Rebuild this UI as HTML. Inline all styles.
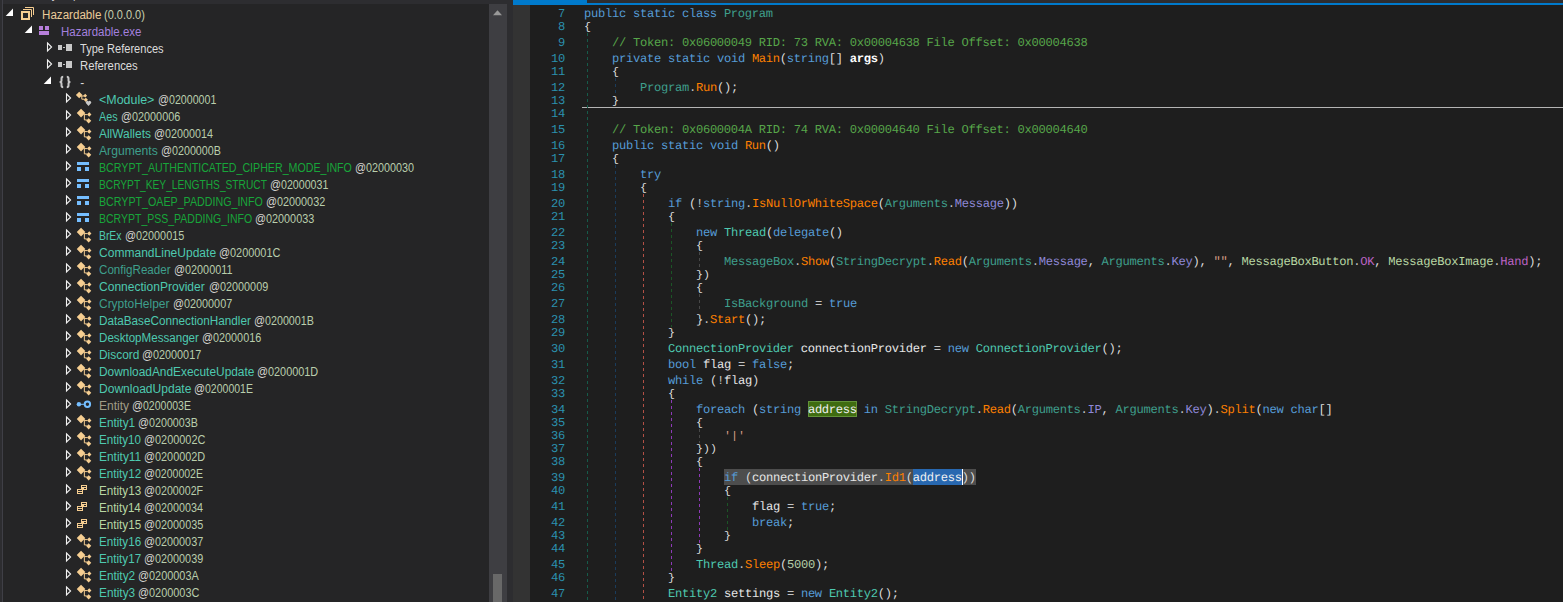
<!DOCTYPE html><html><head><meta charset="utf-8"><title>dnSpy</title><style>

html,body{margin:0;padding:0}
body{width:1563px;height:602px;overflow:hidden;background:#1e1e1e;position:relative}
#tree{position:absolute;left:0;top:0;width:489px;height:602px;background:#252526;overflow:hidden}
#tree .t{position:absolute;transform-origin:0 0;white-space:pre;font-family:"Liberation Sans",sans-serif;font-size:12px;line-height:17px;height:17px}
#code{position:absolute;left:513px;top:0;width:1050px;height:602px;background:#1e1e1e;overflow:hidden}
#code .l,#code .n{position:absolute;white-space:pre;font-family:"Liberation Mono",monospace;font-size:12.14px;letter-spacing:-0.285px;line-height:13px;height:13px;text-rendering:geometricPrecision}
#code .p{font-size:11.667px;letter-spacing:0;text-rendering:auto}
#code .n{left:0;width:52px;text-align:right;color:#2B91AF}
.box{position:absolute}
svg{position:absolute;left:0;top:0}

.d{color:#DCDCDC}
.op{color:#C4C4C4}
.kw{color:#569CD6}
.cm{color:#57A64A}
.ty{color:#4EC9B0}
.st{color:#3E9F8C}
.me{color:#FF8000}
.sf{color:#8E88D8}
.ef{color:#BD63C5}
.en{color:#B8D7A3}
.pr{color:#3E9F8C}
.lo{color:#E6E6E6}
.pa{color:#FFFFFF;font-weight:bold}
.s{color:#D69D85}
.nu{color:#B5CEA8}
.hl,.sel{color:#F0F0F0}
</style></head><body>
<div id="tree">
<div class="box" style="left:0;top:0;width:489px;height:4px;background:#2d2d30"></div>
<div class="box" style="left:0;top:0;width:2px;height:602px;background:#2d2d30"></div>
<div class="box" style="left:2px;top:0;width:1px;height:602px;background:#3f3f46"></div>
<span class="t" style="left:10.3px;top:-14px;color:#D0D0D0;transform:scaleX(0.907)">Assembly Explorer</span>
<svg width="489" height="602" viewBox="0 0 489 602"><path d="M5.7 15.9L13 15.9L13 8.6z" fill="#FFFFFF"/><path d="M21 11h9v9h-9z M23 13v5h5v-5z" fill="#F6CE91" fill-rule="evenodd"/><path d="M23 9.5H31.5V17" fill="none" stroke="#F6CE91" stroke-width="1"/><path d="M25 7.5H33.5V15" fill="none" stroke="#F6CE91" stroke-width="1"/><path d="M24.7 32.9L32 32.9L32 25.6z" fill="#FFFFFF"/><rect x="39" y="26" width="4" height="4" fill="#B77FDB"/><rect x="45" y="26" width="4" height="4" fill="#B77FDB"/><rect x="39" y="31" width="10" height="4" fill="#B77FDB"/><path d="M47.5 43.0L51.6 47.0L47.5 51.0z" fill="none" stroke="#F1F1F1" stroke-width="1.1"/><rect x="58" y="45" width="4" height="5" fill="#C8C8C8"/><rect x="63" y="47" width="2" height="1" fill="#C8C8C8"/><rect x="66" y="44" width="6" height="7" fill="#C8C8C8"/><path d="M47.5 60.0L51.6 64.0L47.5 68.0z" fill="none" stroke="#F1F1F1" stroke-width="1.1"/><rect x="58" y="62" width="4" height="5" fill="#C8C8C8"/><rect x="63" y="64" width="2" height="1" fill="#C8C8C8"/><rect x="66" y="61" width="6" height="7" fill="#C8C8C8"/><path d="M43.7 83.9L51 83.9L51 76.6z" fill="#FFFFFF"/><path d="M63.2 76.8q-1.7 0 -1.7 1.7v2q0 1.55 -1.9 1.55q1.9 0 1.9 1.55v2q0 1.7 1.7 1.7" fill="none" stroke="#C8C8C8" stroke-width="2"/><path d="M66.8 76.8q1.7 0 1.7 1.7v2q0 1.55 1.9 1.55q-1.9 0 -1.9 1.55v2q0 1.7 -1.7 1.7" fill="none" stroke="#C8C8C8" stroke-width="2"/><path d="M66.5 94.0L70.6 98.0L66.5 102.0z" fill="none" stroke="#F1F1F1" stroke-width="1.1"/><path d="M75.90 95.00L79.20 91.70L82.50 95.00L79.20 98.30z M83.30 95.70L85.20 93.80L87.10 95.70L85.20 97.60z M83.70 99.80L85.80 97.70L87.90 99.80L85.80 101.90z" fill="#F6CE91"/><path d="M81.20 96.00h3 M81.80 96.00v3.2h2.5" fill="none" stroke="#F6CE91" stroke-width="1"/><path d="M88.5 106.0l-2.5 -2.7a1.45 1.45 0 0 1 2.5 -1.7a1.45 1.45 0 0 1 2.5 1.7z" fill="#C8C8C8"/><path d="M66.5 111.0L70.6 115.0L66.5 119.0z" fill="none" stroke="#F1F1F1" stroke-width="1.1"/><path d="M76.75 113.10L81.05 108.80L85.35 113.10L81.05 117.40z M87.05 114.50L89.25 112.30L91.45 114.50L89.25 116.70z M86.05 120.80L88.65 118.20L91.25 120.80L88.65 123.40z" fill="#F6CE91"/><path d="M83.65 114.60h3.6 M84.35 114.60v5.3h2.5" fill="none" stroke="#F6CE91" stroke-width="1"/><path d="M66.5 128.0L70.6 132.0L66.5 136.0z" fill="none" stroke="#F1F1F1" stroke-width="1.1"/><path d="M76.75 130.10L81.05 125.80L85.35 130.10L81.05 134.40z M87.05 131.50L89.25 129.30L91.45 131.50L89.25 133.70z M86.05 137.80L88.65 135.20L91.25 137.80L88.65 140.40z" fill="#F6CE91"/><path d="M83.65 131.60h3.6 M84.35 131.60v5.3h2.5" fill="none" stroke="#F6CE91" stroke-width="1"/><path d="M66.5 145.0L70.6 149.0L66.5 153.0z" fill="none" stroke="#F1F1F1" stroke-width="1.1"/><path d="M76.75 147.10L81.05 142.80L85.35 147.10L81.05 151.40z M87.05 148.50L89.25 146.30L91.45 148.50L89.25 150.70z M86.05 154.80L88.65 152.20L91.25 154.80L88.65 157.40z" fill="#F6CE91"/><path d="M83.65 148.60h3.6 M84.35 148.60v5.3h2.5" fill="none" stroke="#F6CE91" stroke-width="1"/><path d="M66.5 162.0L70.6 166.0L66.5 170.0z" fill="none" stroke="#F1F1F1" stroke-width="1.1"/><rect x="77" y="162" width="12" height="3" fill="#75BEFF"/><rect x="77" y="167" width="4" height="4" fill="#75BEFF"/><rect x="85" y="167" width="4" height="4" fill="#75BEFF"/><path d="M66.5 179.0L70.6 183.0L66.5 187.0z" fill="none" stroke="#F1F1F1" stroke-width="1.1"/><rect x="77" y="179" width="12" height="3" fill="#75BEFF"/><rect x="77" y="184" width="4" height="4" fill="#75BEFF"/><rect x="85" y="184" width="4" height="4" fill="#75BEFF"/><path d="M66.5 196.0L70.6 200.0L66.5 204.0z" fill="none" stroke="#F1F1F1" stroke-width="1.1"/><rect x="77" y="196" width="12" height="3" fill="#75BEFF"/><rect x="77" y="201" width="4" height="4" fill="#75BEFF"/><rect x="85" y="201" width="4" height="4" fill="#75BEFF"/><path d="M66.5 213.0L70.6 217.0L66.5 221.0z" fill="none" stroke="#F1F1F1" stroke-width="1.1"/><rect x="77" y="213" width="12" height="3" fill="#75BEFF"/><rect x="77" y="218" width="4" height="4" fill="#75BEFF"/><rect x="85" y="218" width="4" height="4" fill="#75BEFF"/><path d="M66.5 230.0L70.6 234.0L66.5 238.0z" fill="none" stroke="#F1F1F1" stroke-width="1.1"/><path d="M76.75 232.10L81.05 227.80L85.35 232.10L81.05 236.40z M87.05 233.50L89.25 231.30L91.45 233.50L89.25 235.70z M86.05 239.80L88.65 237.20L91.25 239.80L88.65 242.40z" fill="#F6CE91"/><path d="M83.65 233.60h3.6 M84.35 233.60v5.3h2.5" fill="none" stroke="#F6CE91" stroke-width="1"/><path d="M66.5 247.0L70.6 251.0L66.5 255.0z" fill="none" stroke="#F1F1F1" stroke-width="1.1"/><path d="M76.75 249.10L81.05 244.80L85.35 249.10L81.05 253.40z M87.05 250.50L89.25 248.30L91.45 250.50L89.25 252.70z M86.05 256.80L88.65 254.20L91.25 256.80L88.65 259.40z" fill="#F6CE91"/><path d="M83.65 250.60h3.6 M84.35 250.60v5.3h2.5" fill="none" stroke="#F6CE91" stroke-width="1"/><path d="M66.5 264.0L70.6 268.0L66.5 272.0z" fill="none" stroke="#F1F1F1" stroke-width="1.1"/><path d="M76.75 266.10L81.05 261.80L85.35 266.10L81.05 270.40z M87.05 267.50L89.25 265.30L91.45 267.50L89.25 269.70z M86.05 273.80L88.65 271.20L91.25 273.80L88.65 276.40z" fill="#F6CE91"/><path d="M83.65 267.60h3.6 M84.35 267.60v5.3h2.5" fill="none" stroke="#F6CE91" stroke-width="1"/><path d="M66.5 281.0L70.6 285.0L66.5 289.0z" fill="none" stroke="#F1F1F1" stroke-width="1.1"/><path d="M76.75 283.10L81.05 278.80L85.35 283.10L81.05 287.40z M87.05 284.50L89.25 282.30L91.45 284.50L89.25 286.70z M86.05 290.80L88.65 288.20L91.25 290.80L88.65 293.40z" fill="#F6CE91"/><path d="M83.65 284.60h3.6 M84.35 284.60v5.3h2.5" fill="none" stroke="#F6CE91" stroke-width="1"/><path d="M66.5 298.0L70.6 302.0L66.5 306.0z" fill="none" stroke="#F1F1F1" stroke-width="1.1"/><path d="M76.75 300.10L81.05 295.80L85.35 300.10L81.05 304.40z M87.05 301.50L89.25 299.30L91.45 301.50L89.25 303.70z M86.05 307.80L88.65 305.20L91.25 307.80L88.65 310.40z" fill="#F6CE91"/><path d="M83.65 301.60h3.6 M84.35 301.60v5.3h2.5" fill="none" stroke="#F6CE91" stroke-width="1"/><path d="M66.5 315.0L70.6 319.0L66.5 323.0z" fill="none" stroke="#F1F1F1" stroke-width="1.1"/><path d="M76.75 317.10L81.05 312.80L85.35 317.10L81.05 321.40z M87.05 318.50L89.25 316.30L91.45 318.50L89.25 320.70z M86.05 324.80L88.65 322.20L91.25 324.80L88.65 327.40z" fill="#F6CE91"/><path d="M83.65 318.60h3.6 M84.35 318.60v5.3h2.5" fill="none" stroke="#F6CE91" stroke-width="1"/><path d="M66.5 332.0L70.6 336.0L66.5 340.0z" fill="none" stroke="#F1F1F1" stroke-width="1.1"/><path d="M76.75 334.10L81.05 329.80L85.35 334.10L81.05 338.40z M87.05 335.50L89.25 333.30L91.45 335.50L89.25 337.70z M86.05 341.80L88.65 339.20L91.25 341.80L88.65 344.40z" fill="#F6CE91"/><path d="M83.65 335.60h3.6 M84.35 335.60v5.3h2.5" fill="none" stroke="#F6CE91" stroke-width="1"/><path d="M66.5 349.0L70.6 353.0L66.5 357.0z" fill="none" stroke="#F1F1F1" stroke-width="1.1"/><path d="M76.75 351.10L81.05 346.80L85.35 351.10L81.05 355.40z M87.05 352.50L89.25 350.30L91.45 352.50L89.25 354.70z M86.05 358.80L88.65 356.20L91.25 358.80L88.65 361.40z" fill="#F6CE91"/><path d="M83.65 352.60h3.6 M84.35 352.60v5.3h2.5" fill="none" stroke="#F6CE91" stroke-width="1"/><path d="M66.5 366.0L70.6 370.0L66.5 374.0z" fill="none" stroke="#F1F1F1" stroke-width="1.1"/><path d="M76.75 368.10L81.05 363.80L85.35 368.10L81.05 372.40z M87.05 369.50L89.25 367.30L91.45 369.50L89.25 371.70z M86.05 375.80L88.65 373.20L91.25 375.80L88.65 378.40z" fill="#F6CE91"/><path d="M83.65 369.60h3.6 M84.35 369.60v5.3h2.5" fill="none" stroke="#F6CE91" stroke-width="1"/><path d="M66.5 383.0L70.6 387.0L66.5 391.0z" fill="none" stroke="#F1F1F1" stroke-width="1.1"/><path d="M76.75 385.10L81.05 380.80L85.35 385.10L81.05 389.40z M87.05 386.50L89.25 384.30L91.45 386.50L89.25 388.70z M86.05 392.80L88.65 390.20L91.25 392.80L88.65 395.40z" fill="#F6CE91"/><path d="M83.65 386.60h3.6 M84.35 386.60v5.3h2.5" fill="none" stroke="#F6CE91" stroke-width="1"/><path d="M66.5 400.0L70.6 404.0L66.5 408.0z" fill="none" stroke="#F1F1F1" stroke-width="1.1"/><circle cx="78.9" cy="404.3" r="2.2" fill="#75BEFF"/><rect x="80" y="403.8" width="5" height="1" fill="#75BEFF"/><circle cx="87.4" cy="404.3" r="2.7" fill="none" stroke="#75BEFF" stroke-width="2"/><path d="M66.5 417.0L70.6 421.0L66.5 425.0z" fill="none" stroke="#F1F1F1" stroke-width="1.1"/><path d="M76.75 419.10L81.05 414.80L85.35 419.10L81.05 423.40z M87.05 420.50L89.25 418.30L91.45 420.50L89.25 422.70z M86.05 426.80L88.65 424.20L91.25 426.80L88.65 429.40z" fill="#F6CE91"/><path d="M83.65 420.60h3.6 M84.35 420.60v5.3h2.5" fill="none" stroke="#F6CE91" stroke-width="1"/><path d="M66.5 434.0L70.6 438.0L66.5 442.0z" fill="none" stroke="#F1F1F1" stroke-width="1.1"/><path d="M76.75 436.10L81.05 431.80L85.35 436.10L81.05 440.40z M87.05 437.50L89.25 435.30L91.45 437.50L89.25 439.70z M86.05 443.80L88.65 441.20L91.25 443.80L88.65 446.40z" fill="#F6CE91"/><path d="M83.65 437.60h3.6 M84.35 437.60v5.3h2.5" fill="none" stroke="#F6CE91" stroke-width="1"/><path d="M66.5 451.0L70.6 455.0L66.5 459.0z" fill="none" stroke="#F1F1F1" stroke-width="1.1"/><path d="M76.75 453.10L81.05 448.80L85.35 453.10L81.05 457.40z M87.05 454.50L89.25 452.30L91.45 454.50L89.25 456.70z M86.05 460.80L88.65 458.20L91.25 460.80L88.65 463.40z" fill="#F6CE91"/><path d="M83.65 454.60h3.6 M84.35 454.60v5.3h2.5" fill="none" stroke="#F6CE91" stroke-width="1"/><path d="M66.5 468.0L70.6 472.0L66.5 476.0z" fill="none" stroke="#F1F1F1" stroke-width="1.1"/><path d="M76.75 470.10L81.05 465.80L85.35 470.10L81.05 474.40z M87.05 471.50L89.25 469.30L91.45 471.50L89.25 473.70z M86.05 477.80L88.65 475.20L91.25 477.80L88.65 480.40z" fill="#F6CE91"/><path d="M83.65 471.60h3.6 M84.35 471.60v5.3h2.5" fill="none" stroke="#F6CE91" stroke-width="1"/><path d="M66.5 485.0L70.6 489.0L66.5 493.0z" fill="none" stroke="#F1F1F1" stroke-width="1.1"/><path d="M81 485h6v5h-6z M82 486v1h4v-1z M84 488v1h2v-1z" fill="#F6CE91" fill-rule="evenodd"/><path d="M77 489h6v5h-6z M78 490v1h4v-1z M78 492v1h4v-1z" fill="#F6CE91" fill-rule="evenodd"/><path d="M66.5 502.0L70.6 506.0L66.5 510.0z" fill="none" stroke="#F1F1F1" stroke-width="1.1"/><path d="M81 502h6v5h-6z M82 503v1h4v-1z M84 505v1h2v-1z" fill="#F6CE91" fill-rule="evenodd"/><path d="M77 506h6v5h-6z M78 507v1h4v-1z M78 509v1h4v-1z" fill="#F6CE91" fill-rule="evenodd"/><path d="M66.5 519.0L70.6 523.0L66.5 527.0z" fill="none" stroke="#F1F1F1" stroke-width="1.1"/><path d="M81 519h6v5h-6z M82 520v1h4v-1z M84 522v1h2v-1z" fill="#F6CE91" fill-rule="evenodd"/><path d="M77 523h6v5h-6z M78 524v1h4v-1z M78 526v1h4v-1z" fill="#F6CE91" fill-rule="evenodd"/><path d="M66.5 536.0L70.6 540.0L66.5 544.0z" fill="none" stroke="#F1F1F1" stroke-width="1.1"/><path d="M76.75 538.10L81.05 533.80L85.35 538.10L81.05 542.40z M87.05 539.50L89.25 537.30L91.45 539.50L89.25 541.70z M86.05 545.80L88.65 543.20L91.25 545.80L88.65 548.40z" fill="#F6CE91"/><path d="M83.65 539.60h3.6 M84.35 539.60v5.3h2.5" fill="none" stroke="#F6CE91" stroke-width="1"/><path d="M66.5 553.0L70.6 557.0L66.5 561.0z" fill="none" stroke="#F1F1F1" stroke-width="1.1"/><path d="M76.75 555.10L81.05 550.80L85.35 555.10L81.05 559.40z M87.05 556.50L89.25 554.30L91.45 556.50L89.25 558.70z M86.05 562.80L88.65 560.20L91.25 562.80L88.65 565.40z" fill="#F6CE91"/><path d="M83.65 556.60h3.6 M84.35 556.60v5.3h2.5" fill="none" stroke="#F6CE91" stroke-width="1"/><path d="M66.5 570.0L70.6 574.0L66.5 578.0z" fill="none" stroke="#F1F1F1" stroke-width="1.1"/><path d="M76.75 572.10L81.05 567.80L85.35 572.10L81.05 576.40z M87.05 573.50L89.25 571.30L91.45 573.50L89.25 575.70z M86.05 579.80L88.65 577.20L91.25 579.80L88.65 582.40z" fill="#F6CE91"/><path d="M83.65 573.60h3.6 M84.35 573.60v5.3h2.5" fill="none" stroke="#F6CE91" stroke-width="1"/><path d="M66.5 587.0L70.6 591.0L66.5 595.0z" fill="none" stroke="#F1F1F1" stroke-width="1.1"/><path d="M76.75 589.10L81.05 584.80L85.35 589.10L81.05 593.40z M87.05 590.50L89.25 588.30L91.45 590.50L89.25 592.70z M86.05 596.80L88.65 594.20L91.25 596.80L88.65 599.40z" fill="#F6CE91"/><path d="M83.65 590.60h3.6 M84.35 590.60v5.3h2.5" fill="none" stroke="#F6CE91" stroke-width="1"/></svg>
<span class="t" style="left:42.03px;top:7px;color:#EACA98;transform:scaleX(0.9667)">Hazardable</span>
<span class="t" style="left:104.29px;top:7px;color:#C8D2B0;transform:scaleX(0.9135)">(0.0.0.0)</span>
<span class="t" style="left:61.04px;top:24px;color:#A380DE;transform:scaleX(0.9571)">Hazardable.exe</span>
<span class="t" style="left:80.46px;top:41px;color:#DCDCDC;transform:scaleX(0.9221)">Type References</span>
<span class="t" style="left:79.66px;top:58px;color:#DCDCDC;transform:scaleX(0.9413)">References</span>
<span class="t" style="left:80.16px;top:75px;color:#DCDCDC;transform:scaleX(1.0000)">-</span>
<span class="t" style="left:99.43px;top:92px;color:#4EC9B0;transform:scaleX(1.0374)">&lt;Module&gt;</span>
<span class="t" style="left:157.87px;top:92px;color:#D4D4D0;transform:scaleX(0.9092)">@</span>
<span class="t" style="left:168.96px;top:92px;color:#B9CEAC;transform:scaleX(0.8875)">02000001</span>
<span class="t" style="left:99.09px;top:109px;color:#4EC9B0;transform:scaleX(0.8988)">Aes</span>
<span class="t" style="left:121.07px;top:109px;color:#D4D4D0;transform:scaleX(0.9092)">@</span>
<span class="t" style="left:132.16px;top:109px;color:#B9CEAC;transform:scaleX(0.9037)">02000006</span>
<span class="t" style="left:99.08px;top:126px;color:#4EC9B0;transform:scaleX(0.9943)">AllWallets</span>
<span class="t" style="left:154.27px;top:126px;color:#D4D4D0;transform:scaleX(0.9092)">@</span>
<span class="t" style="left:165.36px;top:126px;color:#B9CEAC;transform:scaleX(0.8969)">02000014</span>
<span class="t" style="left:99.08px;top:143px;color:#3E9F8C;transform:scaleX(1.0118)">Arguments</span>
<span class="t" style="left:161.07px;top:143px;color:#D4D4D0;transform:scaleX(0.9092)">@</span>
<span class="t" style="left:172.16px;top:143px;color:#B9CEAC;transform:scaleX(0.8936)">0200000B</span>
<span class="t" style="left:98.71px;top:160px;color:#18A53A;transform:scaleX(0.8875)">BCRYPT_AUTHENTICATED_CIPHER_MODE_INFO</span>
<span class="t" style="left:354.77px;top:160px;color:#D4D4D0;transform:scaleX(0.9092)">@</span>
<span class="t" style="left:365.86px;top:160px;color:#B9CEAC;transform:scaleX(0.8992)">02000030</span>
<span class="t" style="left:98.75px;top:177px;color:#18A53A;transform:scaleX(0.8485)">BCRYPT_KEY_LENGTHS_STRUCT</span>
<span class="t" style="left:270.17px;top:177px;color:#D4D4D0;transform:scaleX(0.9092)">@</span>
<span class="t" style="left:281.26px;top:177px;color:#B9CEAC;transform:scaleX(0.8875)">02000031</span>
<span class="t" style="left:98.71px;top:194px;color:#18A53A;transform:scaleX(0.8893)">BCRYPT_OAEP_PADDING_INFO</span>
<span class="t" style="left:265.87px;top:194px;color:#D4D4D0;transform:scaleX(0.9092)">@</span>
<span class="t" style="left:276.96px;top:194px;color:#B9CEAC;transform:scaleX(0.9027)">02000032</span>
<span class="t" style="left:98.73px;top:211px;color:#18A53A;transform:scaleX(0.8750)">BCRYPT_PSS_PADDING_INFO</span>
<span class="t" style="left:254.97px;top:211px;color:#D4D4D0;transform:scaleX(0.9092)">@</span>
<span class="t" style="left:266.06px;top:211px;color:#B9CEAC;transform:scaleX(0.9033)">02000033</span>
<span class="t" style="left:98.74px;top:228px;color:#4EC9B0;transform:scaleX(0.8638)">BrEx</span>
<span class="t" style="left:124.57px;top:228px;color:#D4D4D0;transform:scaleX(0.9092)">@</span>
<span class="t" style="left:135.66px;top:228px;color:#B9CEAC;transform:scaleX(0.9032)">02000015</span>
<span class="t" style="left:99.09px;top:245px;color:#4EC9B0;transform:scaleX(1.0030)">CommandLineUpdate</span>
<span class="t" style="left:219.37px;top:245px;color:#D4D4D0;transform:scaleX(0.9092)">@</span>
<span class="t" style="left:230.45px;top:245px;color:#B9CEAC;transform:scaleX(0.9087)">0200001C</span>
<span class="t" style="left:99.11px;top:262px;color:#3E9F8C;transform:scaleX(0.9666)">ConfigReader</span>
<span class="t" style="left:174.17px;top:262px;color:#D4D4D0;transform:scaleX(0.9092)">@</span>
<span class="t" style="left:185.25px;top:262px;color:#B9CEAC;transform:scaleX(0.9047)">02000011</span>
<span class="t" style="left:99.09px;top:279px;color:#4EC9B0;transform:scaleX(1.0037)">ConnectionProvider</span>
<span class="t" style="left:208.57px;top:279px;color:#D4D4D0;transform:scaleX(0.9092)">@</span>
<span class="t" style="left:219.66px;top:279px;color:#B9CEAC;transform:scaleX(0.9027)">02000009</span>
<span class="t" style="left:99.09px;top:296px;color:#3E9F8C;transform:scaleX(0.9962)">CryptoHelper</span>
<span class="t" style="left:173.17px;top:296px;color:#D4D4D0;transform:scaleX(0.9092)">@</span>
<span class="t" style="left:184.26px;top:296px;color:#B9CEAC;transform:scaleX(0.9027)">02000007</span>
<span class="t" style="left:98.62px;top:313px;color:#4EC9B0;transform:scaleX(0.9772)">DataBaseConnectionHandler</span>
<span class="t" style="left:254.17px;top:313px;color:#D4D4D0;transform:scaleX(0.9092)">@</span>
<span class="t" style="left:265.26px;top:313px;color:#B9CEAC;transform:scaleX(0.8936)">0200001B</span>
<span class="t" style="left:98.63px;top:330px;color:#4EC9B0;transform:scaleX(0.9666)">DesktopMessanger</span>
<span class="t" style="left:202.27px;top:330px;color:#D4D4D0;transform:scaleX(0.9092)">@</span>
<span class="t" style="left:213.36px;top:330px;color:#B9CEAC;transform:scaleX(0.9037)">02000016</span>
<span class="t" style="left:98.61px;top:347px;color:#4EC9B0;transform:scaleX(0.9923)">Discord</span>
<span class="t" style="left:141.87px;top:347px;color:#D4D4D0;transform:scaleX(0.9092)">@</span>
<span class="t" style="left:152.96px;top:347px;color:#B9CEAC;transform:scaleX(0.9027)">02000017</span>
<span class="t" style="left:98.61px;top:364px;color:#4EC9B0;transform:scaleX(0.9912)">DownloadAndExecuteUpdate</span>
<span class="t" style="left:257.17px;top:364px;color:#D4D4D0;transform:scaleX(0.9092)">@</span>
<span class="t" style="left:268.25px;top:364px;color:#B9CEAC;transform:scaleX(0.9068)">0200001D</span>
<span class="t" style="left:98.60px;top:381px;color:#4EC9B0;transform:scaleX(1.0038)">DownloadUpdate</span>
<span class="t" style="left:194.37px;top:381px;color:#D4D4D0;transform:scaleX(0.9092)">@</span>
<span class="t" style="left:205.47px;top:381px;color:#B9CEAC;transform:scaleX(0.8762)">0200001E</span>
<span class="t" style="left:98.60px;top:398px;color:#A09C86;transform:scaleX(1.0019)">Entity</span>
<span class="t" style="left:132.17px;top:398px;color:#D4D4D0;transform:scaleX(0.9092)">@</span>
<span class="t" style="left:143.27px;top:398px;color:#B9CEAC;transform:scaleX(0.8762)">0200003E</span>
<span class="t" style="left:98.62px;top:415px;color:#4EC9B0;transform:scaleX(0.9847)">Entity1</span>
<span class="t" style="left:137.97px;top:415px;color:#D4D4D0;transform:scaleX(0.9092)">@</span>
<span class="t" style="left:149.06px;top:415px;color:#B9CEAC;transform:scaleX(0.8936)">0200003B</span>
<span class="t" style="left:98.63px;top:432px;color:#4EC9B0;transform:scaleX(0.9667)">Entity10</span>
<span class="t" style="left:143.97px;top:432px;color:#D4D4D0;transform:scaleX(0.9092)">@</span>
<span class="t" style="left:155.05px;top:432px;color:#B9CEAC;transform:scaleX(0.9087)">0200002C</span>
<span class="t" style="left:98.60px;top:449px;color:#4EC9B0;transform:scaleX(0.9951)">Entity11</span>
<span class="t" style="left:143.97px;top:449px;color:#D4D4D0;transform:scaleX(0.9092)">@</span>
<span class="t" style="left:155.05px;top:449px;color:#B9CEAC;transform:scaleX(0.9068)">0200002D</span>
<span class="t" style="left:98.63px;top:466px;color:#4EC9B0;transform:scaleX(0.9714)">Entity12</span>
<span class="t" style="left:143.97px;top:466px;color:#D4D4D0;transform:scaleX(0.9092)">@</span>
<span class="t" style="left:155.07px;top:466px;color:#B9CEAC;transform:scaleX(0.8762)">0200002E</span>
<span class="t" style="left:98.63px;top:483px;color:#B8D7A3;transform:scaleX(0.9721)">Entity13</span>
<span class="t" style="left:143.97px;top:483px;color:#D4D4D0;transform:scaleX(0.9092)">@</span>
<span class="t" style="left:155.06px;top:483px;color:#B9CEAC;transform:scaleX(0.8904)">0200002F</span>
<span class="t" style="left:98.64px;top:500px;color:#B8D7A3;transform:scaleX(0.9636)">Entity14</span>
<span class="t" style="left:143.97px;top:500px;color:#D4D4D0;transform:scaleX(0.9092)">@</span>
<span class="t" style="left:155.06px;top:500px;color:#B9CEAC;transform:scaleX(0.8969)">02000034</span>
<span class="t" style="left:98.63px;top:517px;color:#B8D7A3;transform:scaleX(0.9720)">Entity15</span>
<span class="t" style="left:143.97px;top:517px;color:#D4D4D0;transform:scaleX(0.9092)">@</span>
<span class="t" style="left:155.06px;top:517px;color:#B9CEAC;transform:scaleX(0.9032)">02000035</span>
<span class="t" style="left:98.63px;top:534px;color:#4EC9B0;transform:scaleX(0.9727)">Entity16</span>
<span class="t" style="left:143.97px;top:534px;color:#D4D4D0;transform:scaleX(0.9092)">@</span>
<span class="t" style="left:155.06px;top:534px;color:#B9CEAC;transform:scaleX(0.9027)">02000037</span>
<span class="t" style="left:98.63px;top:551px;color:#4EC9B0;transform:scaleX(0.9714)">Entity17</span>
<span class="t" style="left:143.97px;top:551px;color:#D4D4D0;transform:scaleX(0.9092)">@</span>
<span class="t" style="left:155.06px;top:551px;color:#B9CEAC;transform:scaleX(0.9027)">02000039</span>
<span class="t" style="left:98.62px;top:568px;color:#4EC9B0;transform:scaleX(0.9847)">Entity2</span>
<span class="t" style="left:137.97px;top:568px;color:#D4D4D0;transform:scaleX(0.9092)">@</span>
<span class="t" style="left:149.05px;top:568px;color:#B9CEAC;transform:scaleX(0.9101)">0200003A</span>
<span class="t" style="left:98.62px;top:585px;color:#4EC9B0;transform:scaleX(0.9847)">Entity3</span>
<span class="t" style="left:137.97px;top:585px;color:#D4D4D0;transform:scaleX(0.9092)">@</span>
<span class="t" style="left:149.05px;top:585px;color:#B9CEAC;transform:scaleX(0.9087)">0200003C</span>
</div>
<div class="box" style="left:489px;top:0;width:18px;height:602px;background:#3e3e42"></div>
<div class="box" style="left:489px;top:0;width:18px;height:4px;background:#2d2d30"></div>
<div class="box" style="left:493px;top:574px;width:9px;height:28px;background:#686868"></div>
<svg width="520" height="30" viewBox="0 0 520 30"><path d="M493 15.3L497.5 10.2L502 15.3z" fill="#999999"/></svg>
<div class="box" style="left:507px;top:0;width:6px;height:602px;background:#2d2d30"></div>
<div id="code">
<div class="box" style="left:0;top:0;width:17px;height:602px;background:#333333"></div>
<div class="box" style="left:0;top:0;width:1050px;height:5px;background:#007acc"></div>
<div class="box" style="left:74px;top:0;width:976px;height:3px;background:#2d2d30"></div>
<div class="box" style="left:211px;top:469px;width:252px;height:16px;background:#4d4d4d"></div>
<div class="box" style="left:400px;top:469px;width:49px;height:16px;background:#2868B0"></div>
<div class="box" style="left:449px;top:469px;width:1px;height:16px;background:#FFFFFF"></div>
<div class="box" style="left:295px;top:401px;width:47px;height:14px;background:#3F6C10;border:1px solid #629238"></div>
<div class="box" style="left:69px;top:107px;width:981px;height:1px;background:#B4B4B4"></div>
<div class="box" style="left:74px;top:33px;width:1px;height:569px;background:repeating-linear-gradient(to bottom,#155C4A 0,#155C4A 3px,transparent 3px,transparent 6px)"></div>
<div class="box" style="left:102px;top:78px;width:1px;height:17px;background:repeating-linear-gradient(to bottom,#1A3C5C 0,#1A3C5C 3px,transparent 3px,transparent 6px)"></div>
<div class="box" style="left:102px;top:165px;width:1px;height:437px;background:repeating-linear-gradient(to bottom,#1A3C5C 0,#1A3C5C 3px,transparent 3px,transparent 6px)"></div>
<div class="box" style="left:130px;top:194px;width:1px;height:408px;background:repeating-linear-gradient(to bottom,#B35045 0,#B35045 3px,transparent 3px,transparent 6px)"></div>
<div class="box" style="left:158px;top:223px;width:1px;height:104px;background:repeating-linear-gradient(to bottom,#1B5526 0,#1B5526 3px,transparent 3px,transparent 6px)"></div>
<div class="box" style="left:186px;top:252px;width:1px;height:17px;background:repeating-linear-gradient(to bottom,#484848 0,#484848 3px,transparent 3px,transparent 6px)"></div>
<div class="box" style="left:186px;top:294px;width:1px;height:17px;background:repeating-linear-gradient(to bottom,#484848 0,#484848 3px,transparent 3px,transparent 6px)"></div>
<div class="box" style="left:158px;top:400px;width:1px;height:172px;background:repeating-linear-gradient(to bottom,#8E3AB8 0,#8E3AB8 3px,transparent 3px,transparent 6px)"></div>
<div class="box" style="left:186px;top:429px;width:1px;height:14px;background:repeating-linear-gradient(to bottom,#484848 0,#484848 3px,transparent 3px,transparent 6px)"></div>
<div class="box" style="left:186px;top:468px;width:1px;height:75px;background:repeating-linear-gradient(to bottom,#8E3AB8 0,#8E3AB8 3px,transparent 3px,transparent 6px)"></div>
<div class="box" style="left:214px;top:497px;width:1px;height:33px;background:repeating-linear-gradient(to bottom,#1B5526 0,#1B5526 3px,transparent 3px,transparent 6px)"></div>
<span class="n" style="top:8px">7</span>
<span class="l" style="left:71px;top:8px"><span class="kw">public</span><span class="d"> </span><span class="kw">static</span><span class="d"> </span><span class="kw">class</span><span class="d"> </span><span class="st">Program</span></span>
<span class="n" style="top:21px">8</span>
<span class="l p" style="left:71px;top:21px"><span class="d">{</span></span>
<span class="n" style="top:37px">9</span>
<span class="l" style="left:99px;top:37px"><span class="cm">// Token: 0x06000049 RID: 73 RVA: 0x00004638 File Offset: 0x00004638</span></span>
<span class="n" style="top:53px">10</span>
<span class="l" style="left:99px;top:53px"><span class="kw">private</span><span class="d"> </span><span class="kw">static</span><span class="d"> </span><span class="kw">void</span><span class="d"> </span><span class="me">Main</span><span class="d">(</span><span class="kw">string</span><span class="d">[] </span><span class="pa">args</span><span class="d">)</span></span>
<span class="n" style="top:66px">11</span>
<span class="l p" style="left:99px;top:66px"><span class="d">{</span></span>
<span class="n" style="top:82px">12</span>
<span class="l" style="left:127px;top:82px"><span class="st">Program</span><span class="op">.</span><span class="me">Run</span><span class="d">();</span></span>
<span class="n" style="top:95px">13</span>
<span class="l p" style="left:99px;top:95px"><span class="d">}</span></span>
<span class="n" style="top:108px">14</span>
<span class="n" style="top:124px">15</span>
<span class="l" style="left:99px;top:124px"><span class="cm">// Token: 0x0600004A RID: 74 RVA: 0x00004640 File Offset: 0x00004640</span></span>
<span class="n" style="top:140px">16</span>
<span class="l" style="left:99px;top:140px"><span class="kw">public</span><span class="d"> </span><span class="kw">static</span><span class="d"> </span><span class="kw">void</span><span class="d"> </span><span class="me">Run</span><span class="d">()</span></span>
<span class="n" style="top:153px">17</span>
<span class="l p" style="left:99px;top:153px"><span class="d">{</span></span>
<span class="n" style="top:169px">18</span>
<span class="l" style="left:127px;top:169px"><span class="kw">try</span></span>
<span class="n" style="top:182px">19</span>
<span class="l p" style="left:127px;top:182px"><span class="d">{</span></span>
<span class="n" style="top:198px">20</span>
<span class="l" style="left:155px;top:198px"><span class="kw">if</span><span class="d"> (</span><span class="op">!</span><span class="kw">string</span><span class="op">.</span><span class="me">IsNullOrWhiteSpace</span><span class="d">(</span><span class="st">Arguments</span><span class="op">.</span><span class="sf">Message</span><span class="d">))</span></span>
<span class="n" style="top:211px">21</span>
<span class="l p" style="left:155px;top:211px"><span class="d">{</span></span>
<span class="n" style="top:227px">22</span>
<span class="l" style="left:183px;top:227px"><span class="kw">new</span><span class="d"> </span><span class="ty">Thread</span><span class="d">(</span><span class="kw">delegate</span><span class="d">()</span></span>
<span class="n" style="top:240px">23</span>
<span class="l p" style="left:183px;top:240px"><span class="d">{</span></span>
<span class="n" style="top:256px">24</span>
<span class="l" style="left:211px;top:256px"><span class="st">MessageBox</span><span class="op">.</span><span class="me">Show</span><span class="d">(</span><span class="st">StringDecrypt</span><span class="op">.</span><span class="me">Read</span><span class="d">(</span><span class="st">Arguments</span><span class="op">.</span><span class="sf">Message</span><span class="d">, </span><span class="st">Arguments</span><span class="op">.</span><span class="sf">Key</span><span class="d">), </span><span class="s">&quot;&quot;</span><span class="d">, </span><span class="en">MessageBoxButton</span><span class="op">.</span><span class="ef">OK</span><span class="d">, </span><span class="en">MessageBoxImage</span><span class="op">.</span><span class="ef">Hand</span><span class="d">);</span></span>
<span class="n" style="top:269px">25</span>
<span class="l p" style="left:183px;top:269px"><span class="d">})</span></span>
<span class="n" style="top:282px">26</span>
<span class="l p" style="left:183px;top:282px"><span class="d">{</span></span>
<span class="n" style="top:298px">27</span>
<span class="l" style="left:211px;top:298px"><span class="pr">IsBackground</span><span class="d"> </span><span class="op">=</span><span class="d"> </span><span class="kw">true</span></span>
<span class="n" style="top:314px">28</span>
<span class="l" style="left:183px;top:314px"><span class="d">}</span><span class="op">.</span><span class="me">Start</span><span class="d">();</span></span>
<span class="n" style="top:327px">29</span>
<span class="l p" style="left:155px;top:327px"><span class="d">}</span></span>
<span class="n" style="top:343px">30</span>
<span class="l" style="left:155px;top:343px"><span class="ty">ConnectionProvider</span><span class="d"> </span><span class="lo">connectionProvider</span><span class="d"> </span><span class="op">=</span><span class="d"> </span><span class="kw">new</span><span class="d"> </span><span class="ty">ConnectionProvider</span><span class="d">();</span></span>
<span class="n" style="top:359px">31</span>
<span class="l" style="left:155px;top:359px"><span class="kw">bool</span><span class="d"> </span><span class="lo">flag</span><span class="d"> </span><span class="op">=</span><span class="d"> </span><span class="kw">false</span><span class="d">;</span></span>
<span class="n" style="top:375px">32</span>
<span class="l" style="left:155px;top:375px"><span class="kw">while</span><span class="d"> (</span><span class="op">!</span><span class="lo">flag</span><span class="d">)</span></span>
<span class="n" style="top:388px">33</span>
<span class="l p" style="left:155px;top:388px"><span class="d">{</span></span>
<span class="n" style="top:404px">34</span>
<span class="l" style="left:183px;top:404px"><span class="kw">foreach</span><span class="d"> (</span><span class="kw">string</span><span class="d"> </span><span class="hl">address</span><span class="d"> </span><span class="kw">in</span><span class="d"> </span><span class="st">StringDecrypt</span><span class="op">.</span><span class="me">Read</span><span class="d">(</span><span class="st">Arguments</span><span class="op">.</span><span class="sf">IP</span><span class="d">, </span><span class="st">Arguments</span><span class="op">.</span><span class="sf">Key</span><span class="d">)</span><span class="op">.</span><span class="me">Split</span><span class="d">(</span><span class="kw">new</span><span class="d"> </span><span class="kw">char</span><span class="d">[]</span></span>
<span class="n" style="top:417px">35</span>
<span class="l p" style="left:183px;top:417px"><span class="d">{</span></span>
<span class="n" style="top:430px">36</span>
<span class="l p" style="left:211px;top:430px"><span class="s">&#x27;|&#x27;</span></span>
<span class="n" style="top:443px">37</span>
<span class="l p" style="left:183px;top:443px"><span class="d">}))</span></span>
<span class="n" style="top:456px">38</span>
<span class="l p" style="left:183px;top:456px"><span class="d">{</span></span>
<span class="n" style="top:472px">39</span>
<span class="l" style="left:211px;top:472px"><span class="kw">if</span><span class="d"> (</span><span class="lo">connectionProvider</span><span class="op">.</span><span class="me">Id1</span><span class="d">(</span><span class="sel">address</span><span class="d">))</span></span>
<span class="n" style="top:485px">40</span>
<span class="l p" style="left:211px;top:485px"><span class="d">{</span></span>
<span class="n" style="top:501px">41</span>
<span class="l" style="left:239px;top:501px"><span class="lo">flag</span><span class="d"> </span><span class="op">=</span><span class="d"> </span><span class="kw">true</span><span class="d">;</span></span>
<span class="n" style="top:517px">42</span>
<span class="l" style="left:239px;top:517px"><span class="kw">break</span><span class="d">;</span></span>
<span class="n" style="top:530px">43</span>
<span class="l p" style="left:211px;top:530px"><span class="d">}</span></span>
<span class="n" style="top:543px">44</span>
<span class="l p" style="left:183px;top:543px"><span class="d">}</span></span>
<span class="n" style="top:559px">45</span>
<span class="l" style="left:183px;top:559px"><span class="ty">Thread</span><span class="op">.</span><span class="me">Sleep</span><span class="d">(</span><span class="nu">5000</span><span class="d">);</span></span>
<span class="n" style="top:572px">46</span>
<span class="l p" style="left:155px;top:572px"><span class="d">}</span></span>
<span class="n" style="top:588px">47</span>
<span class="l" style="left:155px;top:588px"><span class="ty">Entity2</span><span class="d"> </span><span class="lo">settings</span><span class="d"> </span><span class="op">=</span><span class="d"> </span><span class="kw">new</span><span class="d"> </span><span class="ty">Entity2</span><span class="d">();</span></span>
</div>
</body></html>
